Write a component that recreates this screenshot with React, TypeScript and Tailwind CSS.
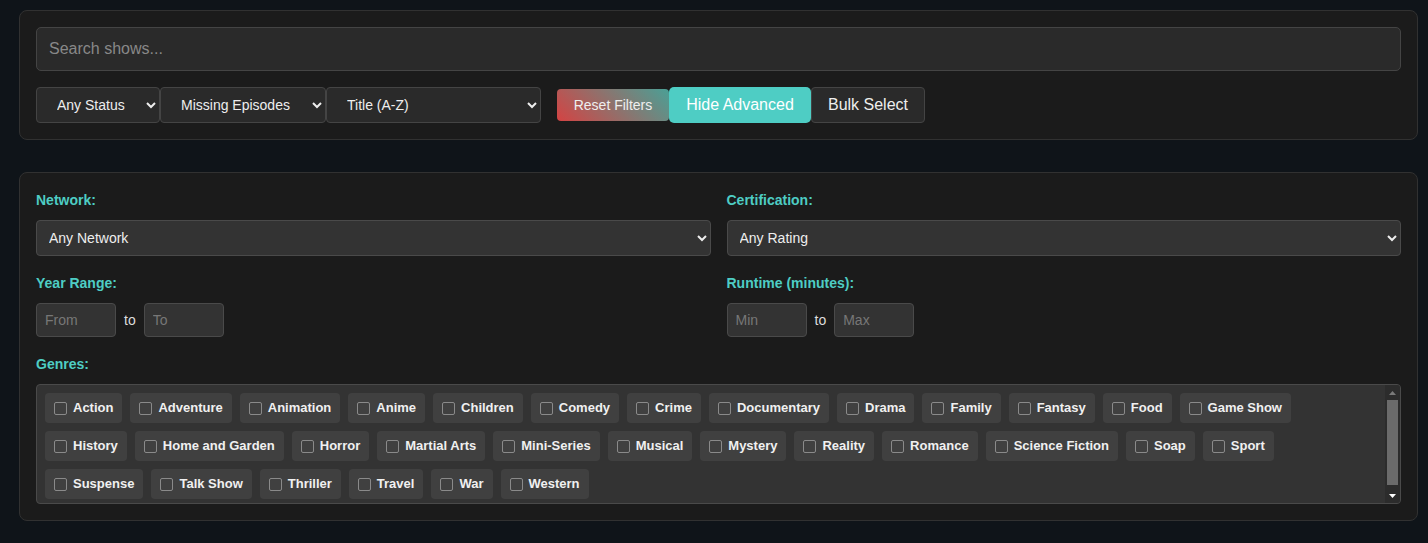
import React from "react";

const genres = [
  "Action","Adventure","Animation","Anime","Children","Comedy","Crime","Documentary","Drama","Family","Fantasy","Food","Game Show",
  "History","Home and Garden","Horror","Martial Arts","Mini-Series","Musical","Mystery","Reality","Romance","Science Fiction","Soap","Sport",
  "Suspense","Talk Show","Thriller","Travel","War","Western",
];

function Label({ children }: { children: React.ReactNode }) {
  return <div className="text-sm font-bold text-[#4ecdc4] leading-5 mb-[10px]">{children}</div>;
}

export default function App() {
  return (
    <div
      className="min-h-screen bg-[#0f1419] pl-[19px] pr-[10px] pt-[10px] pb-4 text-[#eee] [color-scheme:dark]"
      style={{ fontFamily: '"Liberation Sans", Arial, sans-serif' }}
    >
      <div className="rounded-lg border border-[#313131] bg-[#1b1b1b] p-4">
        <input
          placeholder="Search shows..."
          className="block w-full h-[44px] rounded-[5px] border border-[#444] bg-[#2a2a2a] px-3 text-base text-[#eee] placeholder:text-[#888] outline-none"
        />
        <div className="mt-4 flex items-center">
          <select className="h-[36px] w-[124px] rounded-[4px] border border-[#444] bg-[#2a2a2a] pl-4 pr-1 text-sm text-[#eee]">
            <option>Any Status</option>
          </select>
          <select className="h-[36px] w-[166px] rounded-[4px] border border-[#444] bg-[#2a2a2a] pl-4 pr-1 text-sm text-[#eee]">
            <option>Missing Episodes</option>
          </select>
          <select className="h-[36px] w-[215px] rounded-[4px] border border-[#444] bg-[#2a2a2a] pl-4 pr-1 text-sm text-[#eee]">
            <option>Title (A-Z)</option>
          </select>
          <button className="ml-[16px] h-[32px] w-[112px] rounded-[4px] bg-[linear-gradient(45deg,#d44343,#4aa096)] text-sm text-[#eee]">
            Reset Filters
          </button>
          <button className="h-[36px] w-[142px] rounded-[5px] bg-[#4ecdc4] text-base text-white">
            Hide Advanced
          </button>
          <button className="h-[36px] w-[114px] rounded-[4px] border border-[#444] bg-[#2a2a2a] text-base text-[#eee]">
            Bulk Select
          </button>
        </div>
      </div>

      <div className="mt-[32px] rounded-lg border border-[#313131] bg-[#1b1b1b] px-4 pt-[17px] pb-4">
        <div className="grid grid-cols-2 gap-x-4 gap-y-[17px]">
          <div>
            <Label>Network:</Label>
            <select className="block h-[36px] w-full rounded-[4px] border border-[#4a4a4a] bg-[#333] pl-2 pr-1 text-sm text-[#eee]">
              <option>Any Network</option>
            </select>
          </div>
          <div>
            <Label>Certification:</Label>
            <select className="block h-[36px] w-full rounded-[4px] border border-[#4a4a4a] bg-[#333] pl-2 pr-1 text-sm text-[#eee]">
              <option>Any Rating</option>
            </select>
          </div>
          <div>
            <Label>Year Range:</Label>
            <div className="flex items-center gap-2">
              <input placeholder="From" className="h-[34px] w-[80px] rounded-[4px] border border-[#4a4a4a] bg-[#333] px-2 text-sm text-[#eee] placeholder:text-[#777] outline-none" />
              <span className="text-sm text-[#ddd]">to</span>
              <input placeholder="To" className="h-[34px] w-[80px] rounded-[4px] border border-[#4a4a4a] bg-[#333] px-2 text-sm text-[#eee] placeholder:text-[#777] outline-none" />
            </div>
          </div>
          <div>
            <Label>Runtime (minutes):</Label>
            <div className="flex items-center gap-2">
              <input placeholder="Min" className="h-[34px] w-[80px] rounded-[4px] border border-[#4a4a4a] bg-[#333] px-2 text-sm text-[#eee] placeholder:text-[#777] outline-none" />
              <span className="text-sm text-[#ddd]">to</span>
              <input placeholder="Max" className="h-[34px] w-[80px] rounded-[4px] border border-[#4a4a4a] bg-[#333] px-2 text-sm text-[#eee] placeholder:text-[#777] outline-none" />
            </div>
          </div>
          <div className="col-span-2">
            <Label>Genres:</Label>
            <div className="mt-px flex h-[120px] overflow-hidden rounded-[4px] border border-[#4a4a4a] bg-[#333]">
              <div className="flex flex-1 flex-wrap content-start gap-2 p-2">
                {genres.map((g) => (
                  <label
                    key={g}
                    className="flex h-[30px] items-center gap-[6px] rounded-[4px] bg-[#404040] pl-[9px] pr-[9px] text-[13px] font-bold text-[#f0f0f0]"
                  >
                    <span className="block h-[13px] w-[13px] rounded-[2px] border border-[#8a8a8a]" />
                    {g}
                  </label>
                ))}
              </div>
              <div className="flex w-[15px] flex-col items-center bg-[#2c2c2c]">
                <div className="flex h-[15px] w-full items-center justify-center">
                  <svg width="7" height="4" viewBox="0 0 7 4"><path d="M3.5 0L7 4H0z" fill="#7a7a7a" /></svg>
                </div>
                <div className="mb-[3px] w-[11px] flex-1 bg-[#6b6b6b]" />
                <div className="flex h-[15px] w-full items-center justify-center">
                  <svg width="7" height="4" viewBox="0 0 7 4"><path d="M0 0H7L3.5 4z" fill="#ffffff" /></svg>
                </div>
              </div>
            </div>
          </div>
        </div>
      </div>
    </div>
  );
}
